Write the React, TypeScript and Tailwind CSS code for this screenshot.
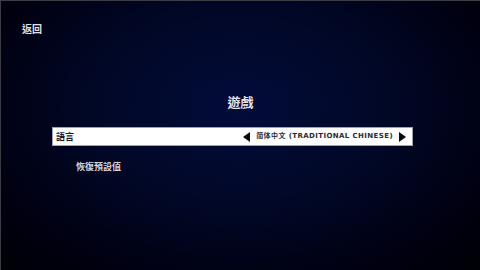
import { useState } from 'react';

const FONT = '"Noto Sans CJK TC", "Noto Sans", sans-serif';

function Arrow({ dir }: { dir: 'left' | 'right' }) {
  return (
    <svg width="7" height="10" viewBox="0 0 7 10" className="shrink-0">
      {dir === 'left' ? <polygon points="7,0 7,10 0,5" fill="#0b0b14" /> : <polygon points="0,0 0,10 7,5" fill="#0b0b14" />}
    </svg>
  );
}

export default function App() {
  const [lang] = useState('简体中文');

  return (
    <div
      className="w-[480px] h-[270px] overflow-hidden flex flex-col border-t border-l border-[#3c3c46] bg-[radial-gradient(ellipse_at_50%_40%,#020c3a_0%,#010828_40%,#000010_80%,#000006_100%)] text-white"
      style={{ fontFamily: FONT }}
    >
      <div className="pl-[21px] pt-[21px] text-[10px] leading-[14px] font-bold text-[#e0e0e6]">返回</div>

      <h1 className="mt-[57px] text-center text-[13px] leading-[18px] font-bold text-[#e4e4ea]">遊戲</h1>

      <div className="ml-[51px] w-[361px] flex flex-col">
        <div className="mt-[16px] h-[19px] bg-white border border-[#9aa0b8] flex items-center pl-[3px] pr-[6px]">
          <span className="text-[9px] font-bold text-[#1a1a24] leading-none">語言</span>
          <div className="ml-auto flex items-center gap-[6px]">
            <Arrow dir="left" />
            <span
              className="text-[7px] font-bold text-[#2a2a36] leading-none tracking-[0.4px]"
              style={{ fontFamily: '"DejaVu Sans", "Noto Sans CJK SC", sans-serif' }}
            >
              {lang} (TRADITIONAL CHINESE)
            </span>
            <Arrow dir="right" />
          </div>
        </div>

        <div className="mt-[15px] pl-[24px] text-[9px] leading-[12px] font-bold text-[#d2d2da]">恢復預設值</div>
      </div>
    </div>
  );
}
